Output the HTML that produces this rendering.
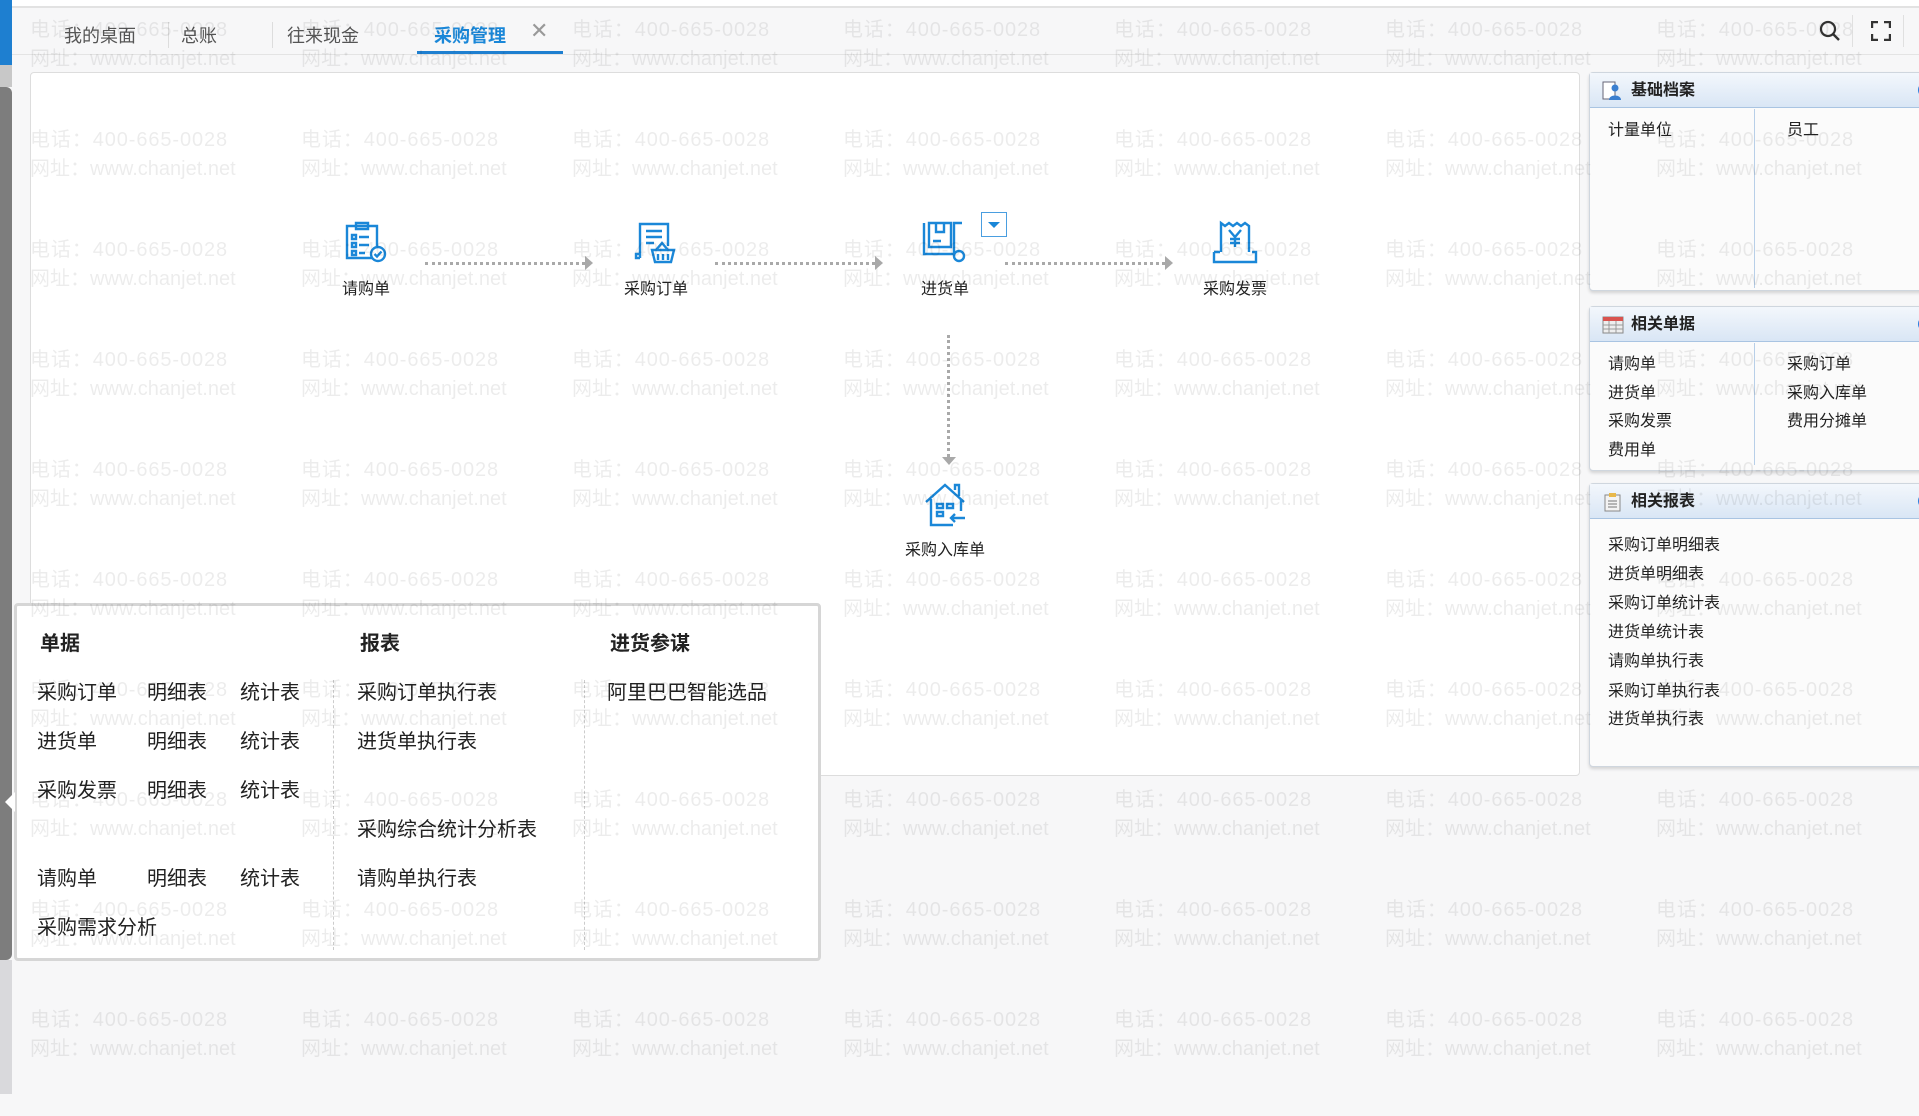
<!DOCTYPE html>
<html><head><meta charset="utf-8"><style>
*{margin:0;padding:0;box-sizing:border-box}
body{width:1919px;height:1094px;background:#f7f7f8;position:relative;overflow:hidden;font-family:"Liberation Sans","Noto Sans CJK SC",sans-serif;color:#222}
.a{position:absolute}
.wm{position:absolute;left:30px;top:16px;display:grid;grid-template-columns:repeat(7,271px);grid-auto-rows:110px;z-index:50;pointer-events:none;color:rgba(0,0,0,0.075);font-size:20px;line-height:29px;white-space:nowrap}
.wm div::first-line{letter-spacing:0.9px}
.t{font-size:18px;color:#555;top:22px}
.sep{width:1px;height:26px;background:#ddd;top:22px}
.lbl{font-size:16px;color:#222;text-align:center;width:120px}
.pop{font-size:20px;color:#222}
.ph{font-size:20px;font-weight:bold;color:#222}
.box{left:1589px;width:340px;background:#fbfbfb;border:1px solid #cfd6de;border-radius:4px;box-shadow:0 2px 3px rgba(0,0,0,.15)}
.hd{height:35px;background:linear-gradient(#f3f7fc,#d9e6f5);border-bottom:1px solid #a9c4e2;font-size:16px;font-weight:bold;line-height:35px;padding-left:41px;position:relative}
.it{font-size:16px;color:#222;position:absolute}
</style></head><body>
<!-- top -->
<div class="a" style="left:0;top:0;width:1919px;height:8px;background:#fff;border-bottom:2px solid #e2e2e2"></div>
<div class="a" style="left:0;top:54px;width:1919px;height:1px;background:#e4e4e4"></div>
<div class="a" style="left:0;top:0;width:12px;height:65px;background:#1e7fd0"></div>
<div class="a" style="left:0;top:65px;width:12px;height:22px;background:#c8c8c8"></div>
<div class="a" style="left:0;top:87px;width:12px;height:873px;background:#7d7d7d;border-radius:0 6px 6px 0"></div>
<div class="a" style="left:0;top:960px;width:12px;height:134px;background:#d9d9dc"></div>
<div class="a t" style="left:64px">我的桌面</div>
<div class="a sep" style="left:168px"></div>
<div class="a t" style="left:181px">总账</div>
<div class="a sep" style="left:272px"></div>
<div class="a t" style="left:287px">往来现金</div>
<div class="a t" style="left:434px;color:#1a87d8;font-weight:bold">采购管理</div>
<div class="a t" style="left:530px;color:#999;font-size:22px;top:18px">✕</div>
<div class="a" style="left:417px;top:51px;width:146px;height:3px;background:#1e7fd0"></div>
<svg class="a" style="left:1818px;top:19px" width="24" height="24" viewBox="0 0 24 24"><circle cx="10" cy="10" r="7" fill="none" stroke="#333" stroke-width="2.2"/><path d="M15 15l6 6" stroke="#333" stroke-width="2.4"/></svg>
<div class="a" style="left:1852px;top:15px;width:1px;height:32px;background:#e0e0e0"></div>
<svg class="a" style="left:1871px;top:21px" width="20" height="20" viewBox="0 0 20 20" fill="none" stroke="#333" stroke-width="2.4"><path d="M1 7V1h6M13 1h6v6M19 13v6h-6M7 19H1v-6"/></svg>
<div class="a" style="left:1903px;top:15px;width:1px;height:32px;background:#e0e0e0"></div>

<!-- main panel -->
<div class="a" style="left:30px;top:72px;width:1550px;height:704px;background:#fff;border:1px solid #ddd;border-radius:4px"></div>

<!-- flow icons -->
<svg class="a" style="left:342px;top:220px" width="48" height="46" viewBox="0 0 48 46" fill="none" stroke="#1a87d8" stroke-width="2.4"><path d="M5 6h30v32H5z"/><path d="M14 3h12v6H14z"/><path d="M10 15h4v4h-4zM10 23h4v4h-4zM10 31h4v4h-4zM17 17h10M17 25h10M17 33h6"/><circle cx="36" cy="34" r="7" fill="#fff"/><path d="M32.5 34l2.5 2.5 4.5-5"/></svg>
<div class="a lbl" style="left:306px;top:275px">请购单</div>
<svg class="a" style="left:632px;top:220px" width="46" height="46" viewBox="0 0 46 46" fill="none" stroke="#1a87d8" stroke-width="2.4"><path d="M8 38V4h28v22"/><path d="M8 38H4v-4h4"/><path d="M14 11h16M14 17h16M14 23h8"/><path d="M20 30h22l-3 12H23z"/><path d="M24 30l6-7 6 7M26 34v6M31 34v6M36 34v6"/></svg>
<div class="a lbl" style="left:596px;top:275px">采购订单</div>
<svg class="a" style="left:921px;top:220px" width="48" height="46" viewBox="0 0 48 46" fill="none" stroke="#1a87d8" stroke-width="2.4"><path d="M3 3v31h30"/><path d="M8 3h22v24H8z"/><path d="M15 3v9h8V3M12 21h8"/><path d="M33 34V3h8"/><circle cx="38" cy="36" r="5" fill="#fff"/></svg>
<div class="a" style="left:981px;top:212px;width:26px;height:25px;border:1.5px solid #4a9ee0;background:#fff"></div>
<div class="a" style="left:988px;top:222px;width:0;height:0;border-left:6px solid transparent;border-right:6px solid transparent;border-top:6px solid #1a87d8"></div>
<div class="a lbl" style="left:885px;top:275px">进货单</div>
<svg class="a" style="left:1211px;top:220px" width="48" height="46" viewBox="0 0 48 46" fill="none" stroke="#1a87d8" stroke-width="2.4"><path d="M10 32V3l4 3 4-3 4 3 4-3 4 3 4-3 4 3v26"/><path d="M3 32h6M41 32h4v10H3V32"/><path d="M18 10l6 7 6-7M24 17v10M19 19h10M19 23h10"/></svg>
<div class="a lbl" style="left:1175px;top:275px">采购发票</div>
<svg class="a" style="left:923px;top:482px" width="46" height="46" viewBox="0 0 46 46" fill="none" stroke="#1a87d8" stroke-width="2.4"><path d="M3 20L22 3l19 17"/><path d="M32 8V3h4v11"/><path d="M8 17v26h22M38 17v12"/><path d="M14 22h6v4h-6zM24 22h6v4h-6zM14 30h6v4h-6z"/><path d="M42 36H28m4-4l-4 4 4 4"/></svg>
<div class="a lbl" style="left:885px;top:536px">采购入库单</div>
<!-- arrows -->
<div class="a" style="left:425px;top:262px;width:160px;border-top:3px dotted #a9a9a9"></div>
<div class="a" style="left:585px;top:256px;border-left:8px solid #a9a9a9;border-top:7px solid transparent;border-bottom:7px solid transparent"></div>
<div class="a" style="left:715px;top:262px;width:160px;border-top:3px dotted #a9a9a9"></div>
<div class="a" style="left:875px;top:256px;border-left:8px solid #a9a9a9;border-top:7px solid transparent;border-bottom:7px solid transparent"></div>
<div class="a" style="left:1005px;top:262px;width:160px;border-top:3px dotted #a9a9a9"></div>
<div class="a" style="left:1165px;top:256px;border-left:8px solid #a9a9a9;border-top:7px solid transparent;border-bottom:7px solid transparent"></div>
<div class="a" style="left:947px;top:335px;height:122px;border-left:3px dotted #a9a9a9"></div>
<div class="a" style="left:942px;top:457px;border-top:8px solid #a9a9a9;border-left:7px solid transparent;border-right:7px solid transparent"></div>

<!-- popup -->
<div class="a" style="left:14px;top:603px;width:807px;height:358px;background:#fff;border:3px solid #d6d6d6;border-radius:4px"></div>
<div class="a" style="left:5px;top:792px;border-right:10px solid #fff;border-top:10px solid transparent;border-bottom:10px solid transparent"></div>
<div class="a" style="left:333px;top:680px;height:270px;border-left:1px dashed #ccc"></div>
<div class="a" style="left:584px;top:680px;height:270px;border-left:1px dashed #ccc"></div>
<div class="a ph" style="left:40px;top:627px">单据</div>
<div class="a ph" style="left:360px;top:627px">报表</div>
<div class="a ph" style="left:610px;top:627px">进货参谋</div>
<div class="a pop" style="left:37px;top:676px">采购订单</div><div class="a pop" style="left:147px;top:676px">明细表</div><div class="a pop" style="left:240px;top:676px">统计表</div>
<div class="a pop" style="left:37px;top:725px">进货单</div><div class="a pop" style="left:147px;top:725px">明细表</div><div class="a pop" style="left:240px;top:725px">统计表</div>
<div class="a pop" style="left:37px;top:774px">采购发票</div><div class="a pop" style="left:147px;top:774px">明细表</div><div class="a pop" style="left:240px;top:774px">统计表</div>
<div class="a pop" style="left:37px;top:862px">请购单</div><div class="a pop" style="left:147px;top:862px">明细表</div><div class="a pop" style="left:240px;top:862px">统计表</div>
<div class="a pop" style="left:37px;top:911px">采购需求分析</div>
<div class="a pop" style="left:357px;top:676px">采购订单执行表</div>
<div class="a pop" style="left:357px;top:725px">进货单执行表</div>
<div class="a pop" style="left:357px;top:813px">采购综合统计分析表</div>
<div class="a pop" style="left:357px;top:862px">请购单执行表</div>
<div class="a pop" style="left:607px;top:676px">阿里巴巴智能选品</div>

<!-- right panel -->
<div class="a box" style="top:72px;height:219px"><div class="hd">基础档案<svg style="position:absolute;left:12px;top:8px" width="22" height="20"><rect x="1" y="1" width="12" height="17" fill="#fff" stroke="#667"/><circle cx="13" cy="7" r="3.5" fill="#3a7fd0"/><path d="M7 19c0-6 12-6 12 0z" fill="#3a7fd0"/></svg><span style="position:absolute;right:-6px;top:9px;width:16px;height:16px;border-radius:50%;background:#2a7ee0"></span></div>
<div class="a" style="left:164px;top:36px;width:1px;height:179px;background:#b8cfe8"></div>
<div class="it" style="left:18px;top:43px">计量单位</div><div class="it" style="left:197px;top:43px">员工</div></div>

<div class="a box" style="top:306px;height:165px"><div class="hd">相关单据<svg style="position:absolute;left:12px;top:9px" width="22" height="18"><rect x="1" y="1" width="20" height="16" fill="#eee" stroke="#888"/><rect x="1" y="1" width="20" height="4" fill="#d9534f"/><path d="M1 9h20M1 13h20M7 5v12M14 5v12" stroke="#999"/></svg><span style="position:absolute;right:-6px;top:9px;width:16px;height:16px;border-radius:50%;background:#2a7ee0"></span></div>
<div class="a" style="left:164px;top:36px;width:1px;height:122px;background:#b8cfe8"></div>
<div class="it" style="left:18px;top:43px">请购单</div><div class="it" style="left:197px;top:43px">采购订单</div>
<div class="it" style="left:18px;top:72px">进货单</div><div class="it" style="left:197px;top:72px">采购入库单</div>
<div class="it" style="left:18px;top:100px">采购发票</div><div class="it" style="left:197px;top:100px">费用分摊单</div>
<div class="it" style="left:18px;top:129px">费用单</div></div>

<div class="a box" style="top:483px;height:284px"><div class="hd">相关报表<svg style="position:absolute;left:14px;top:8px" width="18" height="20"><rect x="1" y="3" width="15" height="16" fill="#f3f3f3" stroke="#888"/><rect x="5" y="1" width="7" height="4" fill="#e8b84a"/><path d="M4 9h9M4 12h9M4 15h9" stroke="#777"/></svg><span style="position:absolute;right:-6px;top:9px;width:16px;height:16px;border-radius:50%;background:#2a7ee0"></span></div>
<div class="it" style="left:18px;top:47px">采购订单明细表</div>
<div class="it" style="left:18px;top:76px">进货单明细表</div>
<div class="it" style="left:18px;top:105px">采购订单统计表</div>
<div class="it" style="left:18px;top:134px">进货单统计表</div>
<div class="it" style="left:18px;top:163px">请购单执行表</div>
<div class="it" style="left:18px;top:193px">采购订单执行表</div>
<div class="it" style="left:18px;top:221px">进货单执行表</div></div>

<!-- watermark -->
<div class="wm">
<div>电话：400-665-0028<br>网址：www.chanjet.net</div><div>电话：400-665-0028<br>网址：www.chanjet.net</div><div>电话：400-665-0028<br>网址：www.chanjet.net</div><div>电话：400-665-0028<br>网址：www.chanjet.net</div><div>电话：400-665-0028<br>网址：www.chanjet.net</div><div>电话：400-665-0028<br>网址：www.chanjet.net</div><div>电话：400-665-0028<br>网址：www.chanjet.net</div>
<div>电话：400-665-0028<br>网址：www.chanjet.net</div><div>电话：400-665-0028<br>网址：www.chanjet.net</div><div>电话：400-665-0028<br>网址：www.chanjet.net</div><div>电话：400-665-0028<br>网址：www.chanjet.net</div><div>电话：400-665-0028<br>网址：www.chanjet.net</div><div>电话：400-665-0028<br>网址：www.chanjet.net</div><div>电话：400-665-0028<br>网址：www.chanjet.net</div>
<div>电话：400-665-0028<br>网址：www.chanjet.net</div><div>电话：400-665-0028<br>网址：www.chanjet.net</div><div>电话：400-665-0028<br>网址：www.chanjet.net</div><div>电话：400-665-0028<br>网址：www.chanjet.net</div><div>电话：400-665-0028<br>网址：www.chanjet.net</div><div>电话：400-665-0028<br>网址：www.chanjet.net</div><div>电话：400-665-0028<br>网址：www.chanjet.net</div>
<div>电话：400-665-0028<br>网址：www.chanjet.net</div><div>电话：400-665-0028<br>网址：www.chanjet.net</div><div>电话：400-665-0028<br>网址：www.chanjet.net</div><div>电话：400-665-0028<br>网址：www.chanjet.net</div><div>电话：400-665-0028<br>网址：www.chanjet.net</div><div>电话：400-665-0028<br>网址：www.chanjet.net</div><div>电话：400-665-0028<br>网址：www.chanjet.net</div>
<div>电话：400-665-0028<br>网址：www.chanjet.net</div><div>电话：400-665-0028<br>网址：www.chanjet.net</div><div>电话：400-665-0028<br>网址：www.chanjet.net</div><div>电话：400-665-0028<br>网址：www.chanjet.net</div><div>电话：400-665-0028<br>网址：www.chanjet.net</div><div>电话：400-665-0028<br>网址：www.chanjet.net</div><div>电话：400-665-0028<br>网址：www.chanjet.net</div>
<div>电话：400-665-0028<br>网址：www.chanjet.net</div><div>电话：400-665-0028<br>网址：www.chanjet.net</div><div>电话：400-665-0028<br>网址：www.chanjet.net</div><div>电话：400-665-0028<br>网址：www.chanjet.net</div><div>电话：400-665-0028<br>网址：www.chanjet.net</div><div>电话：400-665-0028<br>网址：www.chanjet.net</div><div>电话：400-665-0028<br>网址：www.chanjet.net</div>
<div>电话：400-665-0028<br>网址：www.chanjet.net</div><div>电话：400-665-0028<br>网址：www.chanjet.net</div><div>电话：400-665-0028<br>网址：www.chanjet.net</div><div>电话：400-665-0028<br>网址：www.chanjet.net</div><div>电话：400-665-0028<br>网址：www.chanjet.net</div><div>电话：400-665-0028<br>网址：www.chanjet.net</div><div>电话：400-665-0028<br>网址：www.chanjet.net</div>
<div>电话：400-665-0028<br>网址：www.chanjet.net</div><div>电话：400-665-0028<br>网址：www.chanjet.net</div><div>电话：400-665-0028<br>网址：www.chanjet.net</div><div>电话：400-665-0028<br>网址：www.chanjet.net</div><div>电话：400-665-0028<br>网址：www.chanjet.net</div><div>电话：400-665-0028<br>网址：www.chanjet.net</div><div>电话：400-665-0028<br>网址：www.chanjet.net</div>
<div>电话：400-665-0028<br>网址：www.chanjet.net</div><div>电话：400-665-0028<br>网址：www.chanjet.net</div><div>电话：400-665-0028<br>网址：www.chanjet.net</div><div>电话：400-665-0028<br>网址：www.chanjet.net</div><div>电话：400-665-0028<br>网址：www.chanjet.net</div><div>电话：400-665-0028<br>网址：www.chanjet.net</div><div>电话：400-665-0028<br>网址：www.chanjet.net</div>
<div>电话：400-665-0028<br>网址：www.chanjet.net</div><div>电话：400-665-0028<br>网址：www.chanjet.net</div><div>电话：400-665-0028<br>网址：www.chanjet.net</div><div>电话：400-665-0028<br>网址：www.chanjet.net</div><div>电话：400-665-0028<br>网址：www.chanjet.net</div><div>电话：400-665-0028<br>网址：www.chanjet.net</div><div>电话：400-665-0028<br>网址：www.chanjet.net</div>
</div>
</body></html>
